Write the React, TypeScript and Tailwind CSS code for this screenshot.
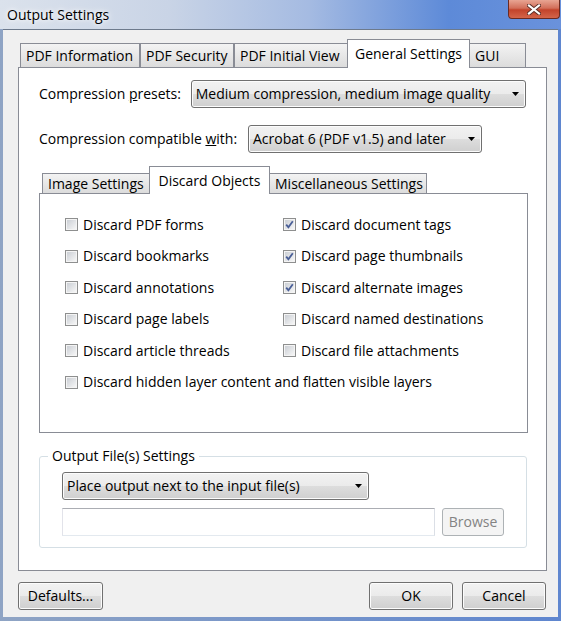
import React from "react";

const font = { fontFamily: '"Open Sans", "Noto Sans", sans-serif' };

function Tab({ label, active, w, h }: { label: string; active?: boolean; w: string; h: string }) {
  return active ? (
    <div
      className={
        "relative z-10 -mb-px flex items-start justify-center whitespace-nowrap border border-b-0 border-[#898c95] bg-white pt-[7px] " +
        w +
        " " +
        h
      }
    >
      {label}
    </div>
  ) : (
    <div
      className={
        "flex items-center whitespace-nowrap border border-b-0 border-[#898c95] bg-gradient-to-b from-[#f3f3f3] to-[#dcdcdc] pl-[5px] " +
        w +
        " " +
        h
      }
    >
      {label}
    </div>
  );
}

function DropArrow() {
  return (
    <svg width="7" height="4" viewBox="0 0 7 4" className="shrink-0">
      <path d="M0 0h7L3.5 4z" fill="#000" />
    </svg>
  );
}

function Select({ value, w }: { value: string; w: string }) {
  return (
    <div
      className={
        "flex h-[28px] items-center justify-between whitespace-nowrap rounded-[3px] border border-[#707070] bg-[linear-gradient(#f2f2f2_0%,#ebebeb_50%,#dddddd_51%,#cfcfcf_100%)] pl-[4px] pr-[6px] shadow-[inset_0_0_0_1px_#fcfcfc] " +
        w
      }
    >
      <span>{value}</span>
      <DropArrow />
    </div>
  );
}

function Button({ label, w, disabled }: { label: string; w: string; disabled?: boolean }) {
  return (
    <div
      className={
        "flex h-[28px] items-center justify-center rounded-[3px] border " +
        (disabled
          ? "border-[#adb2b5] bg-[#f4f4f4] text-[#838383] "
          : "border-[#707070] bg-[linear-gradient(#f2f2f2_0%,#ebebeb_50%,#dddddd_51%,#cfcfcf_100%)] shadow-[inset_0_0_0_1px_#fcfcfc] ") +
        w
      }
    >
      {label}
    </div>
  );
}

function Check({ label, checked }: { label: string; checked?: boolean }) {
  return (
    <div className="flex h-[31.5px] items-center gap-[5px] whitespace-nowrap">
      <div className="flex h-[13px] w-[13px] shrink-0 items-center justify-center border border-[#8e8f8f] bg-white">
        <div className="flex h-[11px] w-[11px] items-center justify-center border border-[#f4f4f4] bg-gradient-to-br from-[#cbcfd5] to-[#f6f6f6]">
          {checked && (
            <svg width="9" height="9" viewBox="0 0 9 9">
              <path d="M1.2 4.6 3.4 7.2 7.8 1.2" fill="none" stroke="#4a5f97" strokeWidth="1.8" />
            </svg>
          )}
        </div>
      </div>
      <span>{label}</span>
    </div>
  );
}

export default function App() {
  return (
    <div
      className="relative flex h-[621px] w-[561px] flex-col overflow-hidden bg-[linear-gradient(90deg,#8fa4c4,#5f86cf)] text-[14px] leading-none text-black"
      style={font}
    >
      {/* Aero title bar */}
      <div className="flex h-[29px] shrink-0 items-center bg-[linear-gradient(90deg,#dbe2ec_0%,#c9d4e6_30%,#a5bbe2_55%,#5d8ad8_80%,#6a92dc_100%)] pl-[7px]">
        <span className="text-[14px] [text-shadow:0_0_8px_#ffffff,0_0_4px_#ffffff]">Output Settings</span>
      </div>
      <div className="absolute right-[1px] top-0 flex h-[19px] w-[52px] items-center justify-center rounded-b-[4px] border border-t-0 border-[#6b2a22] bg-[linear-gradient(#e8a593_0%,#d26f5a_45%,#c3432b_55%,#d4654a_100%)]">
        <svg width="14" height="11" viewBox="0 0 14 11">
          <path d="M2 1.5 12 9.5M12 1.5 2 9.5" stroke="#5a2d26" strokeWidth="4" strokeLinecap="square" />
          <path d="M2 1.5 12 9.5M12 1.5 2 9.5" stroke="#fff" strokeWidth="2.2" strokeLinecap="square" />
        </svg>
      </div>

      {/* Client area */}
      <div className="mx-[3px] mb-[4px] flex flex-1 flex-col border-t border-[#6d7a8c] bg-[#f0f0f0] pl-[15px] pr-[12px] pt-[9px]">
        <div className="ml-[2px] flex items-end">
          <Tab label="PDF Information" w="w-[120px]" h="h-[24px]" />
          <Tab label="PDF Security" w="w-[94px]" h="h-[24px]" />
          <Tab label="PDF Initial View" w="w-[114px]" h="h-[24px]" />
          <Tab label="General Settings" w="w-[123px] -mx-px" h="h-[29px]" active />
          <Tab label="GUI" w="w-[57px]" h="h-[24px]" />
        </div>

        <div className="flex h-[504px] w-[529px] shrink-0 flex-col border border-[#898c95] bg-white px-[20px] pt-[12px]">
          <div className="flex items-center">
            <span className="w-[152px] whitespace-nowrap">
              Compression <span className="underline">p</span>resets:
            </span>
            <Select value="Medium compression, medium image quality" w="w-[336px]" />
          </div>
          <div className="mt-[17px] flex items-center">
            <span className="w-[209px] whitespace-nowrap">
              Compression compatible <span className="underline">w</span>ith:
            </span>
            <Select value="Acrobat 6 (PDF v1.5) and later" w="w-[234px]" />
          </div>

          <div className="mt-[13px] flex items-end pl-[3px]">
            <Tab label="Image Settings" w="w-[108px]" h="h-[20px]" />
            <Tab label="Discard Objects" w="w-[121px] -mx-px" h="h-[28px]" active />
            <Tab label="Miscellaneous Settings" w="w-[158px]" h="h-[20px]" />
          </div>
          <div className="h-[240px] w-[489px] shrink-0 border border-[#898c95] bg-white pl-[25px] pt-[15px]">
            <div className="grid grid-cols-[218px_1fr]">
              <Check label="Discard PDF forms" />
              <Check label="Discard document tags" checked />
              <Check label="Discard bookmarks" />
              <Check label="Discard page thumbnails" checked />
              <Check label="Discard annotations" />
              <Check label="Discard alternate images" checked />
              <Check label="Discard page labels" />
              <Check label="Discard named destinations" />
              <Check label="Discard article threads" />
              <Check label="Discard file attachments" />
            </div>
            <Check label="Discard hidden layer content and flatten visible layers" />
          </div>

          {/* Output group */}
          <div className="relative mt-[23px] h-[92px] w-[488px] shrink-0 rounded-[3px] border border-[#d5dfe5] px-[22px] pt-[15px]">
            <span className="absolute -top-[8px] left-[8px] whitespace-nowrap bg-white px-[4px]">
              Output File(s) Settings
            </span>
            <Select value="Place output next to the input file(s)" w="w-[307px]" />
            <div className="mt-[8px] flex gap-[7px]">
              <div className="h-[28px] w-[379px] border border-[#abadb3] border-b-[#e3e9ef] border-l-[#e2e3ea] border-r-[#dbdfe6]" />
              <Button label="Browse" w="w-[63px]" disabled />
            </div>
          </div>
        </div>

        <div className="mt-[11px] flex items-center">
          <Button label="Defaults..." w="w-[85px]" />
          <div className="flex-1" />
          <Button label="OK" w="w-[84px]" />
          <Button label="Cancel" w="w-[84px] ml-[9px]" />
        </div>
      </div>
    </div>
  );
}
